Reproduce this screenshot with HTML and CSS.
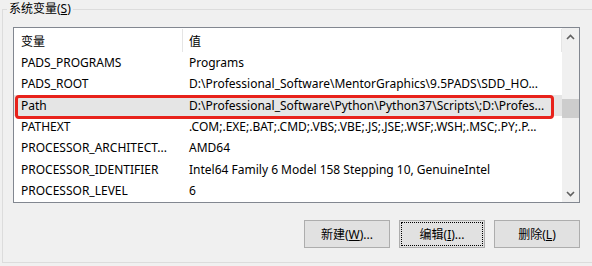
FILE: index.html
```html
<!DOCTYPE html>
<html lang="zh-CN">
<head>
  <meta charset="UTF-8">
  <title>系统变量</title>
  <link rel="stylesheet" href="styles.css">
</head>
<body>

  <div class="group">
    <div class="group-title">系统变量(<u>S</u>)</div>

    <div class="list">
      <div class="table">
        <div class="head">
          <div class="hcell first">变量</div>
          <div class="hcell second">值</div>
        </div>
        <div class="row"><span>PADS_PROGRAMS</span><span>Programs</span></div>
        <div class="row"><span>PADS_ROOT</span><span>D:\Professional_Software\MentorGraphics\9.5PADS\SDD_HO...</span></div>
        <div class="row selected"><span>Path</span><span>D:\Professional_Software\Python\Python37\Scripts\;D:\Profes...</span></div>
        <div class="row"><span>PATHEXT</span><span>.COM;.EXE;.BAT;.CMD;.VBS;.VBE;.JS;.JSE;.WSF;.WSH;.MSC;.PY;.P...</span></div>
        <div class="row"><span>PROCESSOR_ARCHITECT...</span><span>AMD64</span></div>
        <div class="row"><span>PROCESSOR_IDENTIFIER</span><span>Intel64 Family 6 Model 158 Stepping 10, GenuineIntel</span></div>
        <div class="row"><span>PROCESSOR_LEVEL</span><span>6</span></div>
      </div>

      <div class="scrollbar">
        <div class="sb-btn">
          <svg width="9" height="6" viewBox="0 0 9 6"><path d="M1 5 L4.5 1.5 L8 5" fill="none" stroke="#606060" stroke-width="1.6"/></svg>
        </div>
        <div class="sb-track"><div class="sb-thumb"></div></div>
        <div class="sb-btn">
          <svg width="9" height="6" viewBox="0 0 9 6"><path d="M1 1 L4.5 4.5 L8 1" fill="none" stroke="#606060" stroke-width="1.6"/></svg>
        </div>
      </div>

      <div class="mark"></div>
    </div>

    <div class="buttons">
      <button>新建(<u>W</u>)...</button>
      <button class="focused">编辑(<u>I</u>)...</button>
      <button>删除(<u>L</u>)</button>
    </div>
  </div>

</body>
</html>
```

FILE: styles.css
```css
body {
  margin: 0;
  background: #f0f0f0;
  font-family: "Noto Sans", "Noto Sans CJK SC", sans-serif;
  font-size: 12px;
  color: #000;
  overflow: hidden;
}

.group {
  margin: 9px 0 0 2px;
  height: 254px;
  box-sizing: border-box;
  border: 1px solid #dcdcdc;
  border-right: none;
  padding-left: 10px;
}

.group-title {
  width: fit-content;
  margin: -9px 0 0 -6px;
  padding: 0 2px;
  background: #f0f0f0;
  line-height: 16px;
}

.list {
  position: relative;
  display: flex;
  width: 567px;
  height: 176px;
  margin-top: 10px;
  box-sizing: border-box;
  border: 1px solid #828790;
  background: white;
}

.table {
  flex: 1;
  overflow: hidden;
}

.head {
  display: flex;
  height: 24px;
}

.hcell {
  display: flex;
  align-items: center;
  box-sizing: border-box;
  margin-top: 1px;
  border-right: 1px solid #e5e5e5;
}

.hcell.first {
  width: 169px;
  padding-left: 7px;
}

.hcell.second {
  flex: 1;
  padding-left: 6px;
}

.row {
  display: grid;
  grid-template-columns: 169px 1fr;
  height: 21.33px;
  align-items: center;
  white-space: nowrap;
}

.row span {
  overflow: hidden;
  padding-left: 7px;
}

.row span + span {
  padding-left: 6px;
}

.row.selected {
  background: #e5e5e5;
}

.scrollbar {
  width: 17px;
  display: flex;
  flex-direction: column;
  background: #f0f0f0;
}

.sb-btn {
  height: 17px;
  display: flex;
  align-items: center;
  justify-content: center;
}

.sb-track {
  flex: 1;
}

.sb-thumb {
  height: 19px;
  margin-top: 54px;
  background: #cdcdcd;
}

.mark {
  position: absolute;
  left: 1px;
  top: 67px;
  width: 539px;
  height: 24px;
  box-sizing: border-box;
  border: 3px solid #e8221b;
  border-radius: 4px;
}

.buttons {
  display: flex;
  justify-content: flex-end;
  gap: 9px;
  width: 567px;
  margin-top: 17px;
}

.buttons button {
  width: 86px;
  height: 28px;
  background: #e1e1e1;
  border: 1px solid #adadad;
  font-family: "Noto Sans", "Noto Sans CJK SC", sans-serif;
  font-size: 12px;
  color: #000;
  padding: 0;
}

.buttons button.focused {
  outline: 1px dotted #000;
  outline-offset: -3px;
}
```
